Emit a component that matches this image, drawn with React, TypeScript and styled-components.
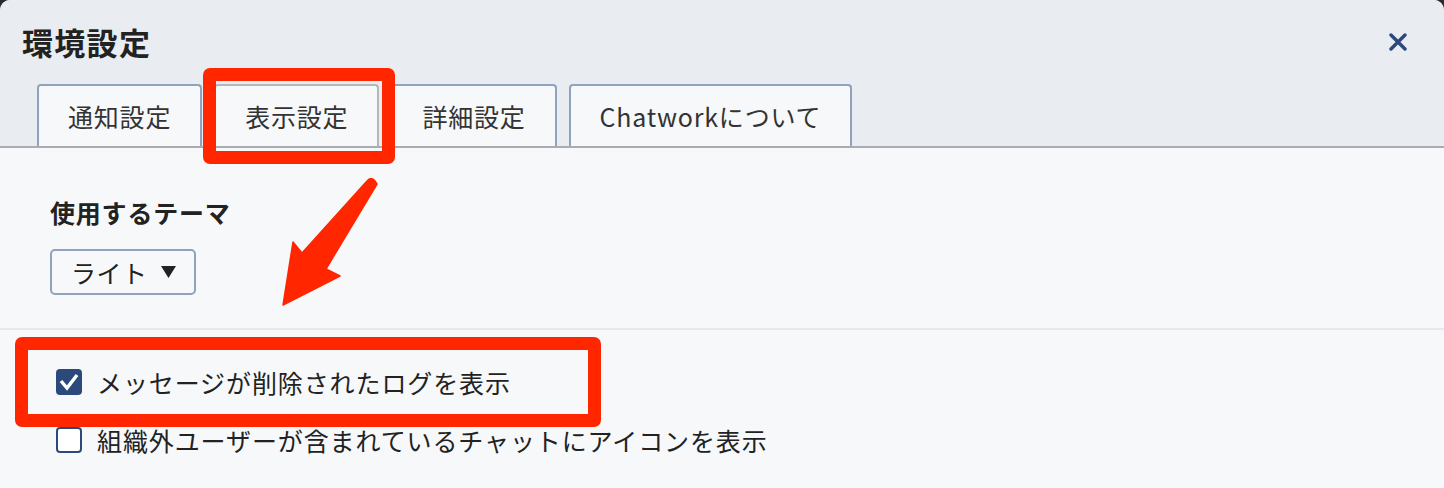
import React from 'react'
import styled, { createGlobalStyle } from 'styled-components'

const GlobalStyle = createGlobalStyle`
  html, body {
    margin: 0;
    padding: 0;
    background: #2b2b2b;
  }
  body {
    font-family: "Noto Sans CJK JP", "Noto Sans", sans-serif;
    color: #222;
  }
`

const annotationRed = '#ff2600'
const navy = '#2c497b'

const Dialog = styled.div`
  position: relative;
  width: 1444px;
  height: 488px;
  border-radius: 10px 10px 0 0;
  overflow: hidden;
  background: #f7f8fa;
`

const Header = styled.div`
  background: #e9ecf1;
  padding: 22px 0 0 22px;
  border-bottom: 2px solid #a9adb2;
`

const TitleRow = styled.div`
  display: flex;
  align-items: center;
  justify-content: space-between;
  height: 40px;
  padding-right: 36px;
`

const Title = styled.h1`
  margin: 0;
  font-size: 31px;
  font-weight: 700;
  line-height: 40px;
  letter-spacing: 1.3px;
  color: #222;
`

const CloseButton = styled.button`
  border: none;
  background: none;
  padding: 0;
  width: 20px;
  height: 20px;
  display: flex;
  align-items: center;
  justify-content: center;
  cursor: pointer;
`

const TabList = styled.div`
  display: flex;
  gap: 12px;
  margin-top: 22px;
  padding-left: 15px;
`

const Tab = styled.div<{ $active?: boolean }>`
  height: 60px;
  padding: 0 29px;
  display: flex;
  align-items: center;
  background: #f7f8fa;
  border: 2px solid ${p => (p.$active ? '#b4b6b9' : '#8fa3be')};
  border-bottom: none;
  border-radius: 4px 4px 0 0;
  font-size: 25px;
  letter-spacing: 0.8px;
  color: #333;
`

const Body = styled.div``

const ThemeSection = styled.div`
  padding: 46px 50px 33px;
  border-bottom: 2px solid #e5e8ed;
`

const SectionLabel = styled.div`
  font-size: 25px;
  font-weight: 700;
  line-height: 36px;
  letter-spacing: 0.8px;
`

const Select = styled.div`
  margin-top: 19px;
  display: inline-flex;
  align-items: center;
  gap: 13px;
  height: 42px;
  padding: 0 18px 0 19px;
  border: 2px solid #8fa3be;
  border-radius: 5px;
  font-size: 25px;
  letter-spacing: 0.5px;
  color: #222;
`

const OptionList = styled.div`
  display: flex;
  flex-direction: column;
  gap: 22px;
  padding: 34px 56px;
`

const OptionRow = styled.label`
  display: flex;
  align-items: center;
  gap: 15px;
  height: 36px;
  font-size: 25px;
  letter-spacing: 0.9px;
  color: #222;
`

const CheckBox = styled.span<{ $checked?: boolean }>`
  box-sizing: border-box;
  width: 26px;
  height: 26px;
  border-radius: 4px;
  border: 2px solid ${navy};
  background: ${p => (p.$checked ? navy : '#fff')};
  display: flex;
  align-items: center;
  justify-content: center;
`

const HighlightBox = styled.div<{ $left: number; $top: number; $width: number; $height: number }>`
  position: absolute;
  left: ${p => p.$left}px;
  top: ${p => p.$top}px;
  width: ${p => p.$width}px;
  height: ${p => p.$height}px;
  box-sizing: border-box;
  border: 13px solid ${annotationRed};
  border-radius: 7px;
  pointer-events: none;
`

const ArrowLayer = styled.svg`
  position: absolute;
  left: 0;
  top: 0;
  pointer-events: none;
`

const tabs = ['通知設定', '表示設定', '詳細設定', 'Chatworkについて']

export default function App() {
  return (
    <>
      <GlobalStyle />
      <Dialog>
        <Header>
          <TitleRow>
            <Title>環境設定</Title>
            <CloseButton aria-label="close">
              <svg width="18" height="18" viewBox="0 0 18 18">
                <path d="M2 2 L16 16 M16 2 L2 16" stroke={navy} strokeWidth="3.4" strokeLinecap="round" />
              </svg>
            </CloseButton>
          </TitleRow>
          <TabList>
            {tabs.map(t => (
              <Tab key={t} $active={t === '表示設定'}>
                {t}
              </Tab>
            ))}
          </TabList>
        </Header>
        <Body>
          <ThemeSection>
            <SectionLabel>使用するテーマ</SectionLabel>
            <Select>
              <span>ライト</span>
              <svg width="15" height="12" viewBox="0 0 15 12">
                <path d="M0 0 H15 L7.5 12 Z" fill="#222" />
              </svg>
            </Select>
          </ThemeSection>
          <OptionList>
            <OptionRow>
              <CheckBox $checked>
                <svg width="20" height="20" viewBox="0 0 20 20">
                  <path d="M2 9 L8 16 L18 3" stroke="#fff" strokeWidth="3.4" fill="none" strokeLinejoin="miter" />
                </svg>
              </CheckBox>
              メッセージが削除されたログを表示
            </OptionRow>
            <OptionRow>
              <CheckBox />
              組織外ユーザーが含まれているチャットにアイコンを表示
            </OptionRow>
          </OptionList>
        </Body>

        <HighlightBox $left={203} $top={68} $width={192} $height={96} />
        <HighlightBox $left={15} $top={337} $width={586} $height={90} />
        <ArrowLayer width="1444" height="488" viewBox="0 0 1444 488">
          <path
            d="M367 181 Q372 175 377 184 L326 269 L340 276 L283 305 L293 242 L302 253 Z"
            fill={annotationRed}
            stroke={annotationRed}
            strokeWidth="1.5"
            strokeLinejoin="round"
          />
        </ArrowLayer>
      </Dialog>
    </>
  )
}
